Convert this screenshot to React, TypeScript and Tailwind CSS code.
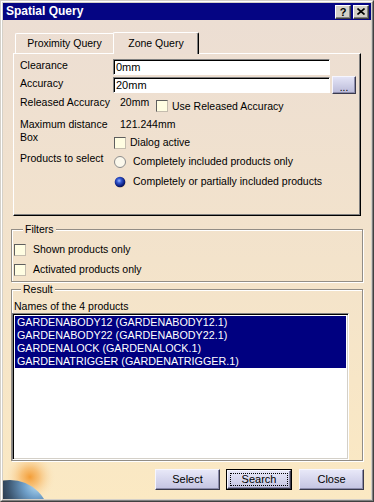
import React from "react";

function CheckBox({ className = "" }: { className?: string }) {
  return (
    <div
      className={`w-[12px] h-[12px] shrink-0 bg-[#fffde2] border border-t-[#5e5e5e] border-l-[#5e5e5e] border-r-[#c4bcae] border-b-[#c4bcae] ${className}`}
    />
  );
}

function Radio({ checked = false }: { checked?: boolean }) {
  if (checked) {
    return (
      <svg width="12" height="12" viewBox="0 0 12 12" className="shrink-0 ml-[1px]">
        <defs>
          <radialGradient id="rsel" cx="42%" cy="38%" r="62%">
            <stop offset="0" stopColor="#9ab8ff" />
            <stop offset="0.35" stopColor="#3458d0" />
            <stop offset="0.8" stopColor="#0c1f80" />
            <stop offset="1" stopColor="#071350" />
          </radialGradient>
        </defs>
        <circle cx="6.4" cy="6.4" r="5.4" fill="#e8c89a" opacity="0.7" />
        <circle cx="6" cy="6" r="5.3" fill="url(#rsel)" />
      </svg>
    );
  }
  return (
    <div className="w-[12px] h-[12px] ml-[1px] shrink-0 rounded-full bg-[#fbf8ec] border border-[#8c8c8c]" />
  );
}

function TextInput({ value }: { value: string }) {
  return (
    <div className="w-[217px] h-[16px] shrink-0 bg-white border border-t-[#808080] border-l-[#808080] border-r-white border-b-white shadow-[inset_1px_1px_0_#000] pl-[2px] text-[11px] leading-[14px] text-black">
      {value}
    </div>
  );
}

function Btn({ label, w, focused = false }: { label: string; w: string; focused?: boolean }) {
  const bevel =
    "bg-gradient-to-b from-[#e8e8f8] to-[#c4c4e2] border border-t-[#f6f6ff] border-l-[#f6f6ff] border-r-[#3a3a4c] border-b-[#3a3a4c] shadow-[inset_-1px_-1px_0_#8c8cac]";
  if (focused) {
    return (
      <div className={`${w} h-[21px] border border-black flex`}>
        <div className={`flex-1 ${bevel} p-[2px] flex`}>
          <div className="flex-1 border border-dotted border-black flex items-center justify-center text-[11px] leading-[13px]">
            {label}
          </div>
        </div>
      </div>
    );
  }
  return (
    <div className={`${w} h-[21px] ${bevel} flex items-center justify-center text-[11px] leading-[13px]`}>
      {label}
    </div>
  );
}

export default function App() {
  return (
    <div className="w-[374px] h-[502px] bg-[#d4d0c8] border border-t-[#d4d0c8] border-l-[#d4d0c8] border-r-[#404040] border-b-[#404040] font-['Liberation_Sans',Arial,sans-serif] text-black">
      <div className="w-full h-full border border-t-white border-l-white border-r-[#808080] border-b-[#808080] p-[1px] flex flex-col">
        {/* Title bar */}
        <div className="h-[17px] shrink-0 bg-[#050583] flex items-center pl-[3px] pr-[2px]">
          <span className="text-white font-bold text-[12px] leading-[15px]">Spatial Query</span>
          <div className="ml-auto flex gap-[2px]">
            <div className="w-[16px] h-[14px] bg-[#d4d0c8] border border-t-white border-l-white border-r-[#404040] border-b-[#404040] shadow-[inset_-1px_-1px_0_#808080] flex items-center justify-center text-[11px] font-bold leading-[12px]">
              ?
            </div>
            <div className="w-[16px] h-[14px] bg-[#d4d0c8] border border-t-white border-l-white border-r-[#404040] border-b-[#404040] shadow-[inset_-1px_-1px_0_#808080] flex items-center justify-center">
              <svg width="8" height="7" viewBox="0 0 8 7">
                <path d="M0.5 0.5 L7.5 6.5 M7.5 0.5 L0.5 6.5" stroke="#000" strokeWidth="1.6" fill="none" />
              </svg>
            </div>
          </div>
        </div>

        {/* Body */}
        <div className="relative flex-1 bg-gradient-to-b from-[#ecded3] via-[#f3e3cb] to-[#fbe9c3] overflow-hidden">
          <svg className="absolute left-0 bottom-0 z-0" width="64" height="44" viewBox="0 0 64 44">
            <defs>
              <radialGradient id="glow" cx="27" cy="22" r="26" gradientUnits="userSpaceOnUse">
                <stop offset="0" stopColor="#f39a30" stopOpacity="0.95" />
                <stop offset="0.35" stopColor="#f6b058" stopOpacity="0.7" />
                <stop offset="1" stopColor="#fbe9c3" stopOpacity="0" />
              </radialGradient>
              <radialGradient id="globe" cx="34" cy="30" r="44" gradientUnits="userSpaceOnUse">
                <stop offset="0" stopColor="#b4dcf4" />
                <stop offset="0.3" stopColor="#6e9ec8" />
                <stop offset="0.65" stopColor="#3c5670" />
                <stop offset="1" stopColor="#1c2330" />
              </radialGradient>
            </defs>
            <circle cx="27" cy="22" r="26" fill="url(#glow)" />
            <circle cx="7" cy="65" r="40" fill="url(#globe)" />
          </svg>

          <div className="relative z-10 flex flex-col pl-[8px] pr-[8px] pt-[12px]">
            {/* Tabs */}
            <div className="flex items-start h-[21px] ml-[4px]">
              <div className="mt-[1px] w-[98px] h-[20px] border-t border-l border-t-white border-l-white rounded-tl-[2px] flex items-center justify-center text-[10.5px] leading-[13px]">
                Proximity Query
              </div>
              <div className="relative z-10 w-[86px] h-[22px] bg-[#ecded3] border-t border-l border-r border-t-white border-l-white border-r-black shadow-[inset_-1px_0_0_#808080] rounded-t-[2px] flex items-center justify-center text-[10.5px] leading-[13px]">
                Zone Query
              </div>
            </div>

            {/* Panel */}
            <div className="ml-[2px] w-[348px] h-[163px] border border-t-white border-l-white border-r-black border-b-black shadow-[inset_-1px_-1px_0_#808080] pl-[6px] flex flex-col text-[10.5px] leading-[13px]">
              {/* Clearance */}
              <div className="mt-[5px] flex h-[16px]">
                <div className="w-[93px] shrink-0 self-start">Clearance</div>
                <TextInput value="0mm" />
              </div>
              {/* Accuracy */}
              <div className="mt-[2px] flex h-[16px] items-start">
                <div className="w-[93px] shrink-0">Accuracy</div>
                <TextInput value="20mm" />
                <div className="ml-[2px] -mt-[1px] w-[24px] h-[18px] bg-gradient-to-b from-[#e4e4f6] to-[#babad8] border border-t-[#f6f6ff] border-l-[#f6f6ff] border-r-[#3a3a4c] border-b-[#3a3a4c] shadow-[inset_-1px_-1px_0_#8c8cac] flex items-end justify-center pb-[1px] text-[10px] leading-[9px]">
                  ...
                </div>
              </div>
              {/* Released accuracy */}
              <div className="mt-[3px] flex h-[17px]">
                <div className="w-[93px] shrink-0 self-start whitespace-nowrap">Released Accuracy</div>
                <div className="w-[43px] shrink-0 pl-[7px] self-start">20mm</div>
                <CheckBox className="self-end mb-[1px]" />
                <div className="ml-[4px] self-end whitespace-nowrap">Use Released Accuracy</div>
              </div>
              {/* Max distance box */}
              <div className="mt-[5px] flex">
                <div className="w-[93px] shrink-0">
                  Maximum distance
                  <br />
                  Box
                </div>
                <div className="flex flex-col">
                  <div className="pl-[7px]">121.244mm</div>
                  <div className="mt-[5px] flex items-center h-[13px]">
                    <CheckBox className="ml-[1px]" />
                    <div className="ml-[4px]">Dialog active</div>
                  </div>
                </div>
              </div>
              {/* Products to select */}
              <div className="mt-[3px] flex">
                <div className="w-[93px] shrink-0 whitespace-nowrap">Products to select</div>
                <div className="flex flex-col">
                  <div className="mt-[3px] flex items-center h-[13px]">
                    <Radio />
                    <div className="ml-[7px] whitespace-nowrap">Completely included products only</div>
                  </div>
                  <div className="mt-[7px] flex items-center h-[13px]">
                    <Radio checked />
                    <div className="ml-[7px] whitespace-nowrap">Completely or partially included products</div>
                  </div>
                </div>
              </div>
            </div>

            {/* Filters */}
            <fieldset className="mt-[7px] border border-[#928d86] shadow-[1px_1px_0_#ffffff,inset_1px_1px_0_#ffffff] pb-[5px] text-[10.5px] leading-[13px]">
              <legend className="ml-[11px] px-[2px] bg-[#f2e2cc]">Filters</legend>
              <div className="mt-[7px] flex items-center h-[13px]">
                <CheckBox className="ml-[2px]" />
                <div className="ml-[7px]">Shown products only</div>
              </div>
              <div className="mt-[7px] flex items-center h-[13px]">
                <CheckBox className="ml-[2px]" />
                <div className="ml-[7px]">Activated products only</div>
              </div>
            </fieldset>

            {/* Result */}
            <fieldset className="mt-[1px] border border-[#928d86] shadow-[1px_1px_0_#ffffff,inset_1px_1px_0_#ffffff] text-[10.5px] leading-[13px]">
              <legend className="ml-[9px] px-[2px] bg-[#f4e4ca]">Result</legend>
              <div className="mt-[4px] pl-[2px] leading-[12px]">Names of the 4 products</div>
              <div className="mt-[1px] w-[337px] h-[147px] bg-white border border-t-[#808080] border-l-[#808080] border-r-white border-b-white shadow-[inset_1px_1px_0_#000,inset_-1px_-1px_0_#d4d0c8] pt-[2px] px-[2px] text-[10.75px]">
                {[
                  "GARDENABODY12 (GARDENABODY12.1)",
                  "GARDENABODY22 (GARDENABODY22.1)",
                  "GARDENALOCK (GARDENALOCK.1)",
                  "GARDENATRIGGER (GARDENATRIGGER.1)",
                ].map((t) => (
                  <div key={t} className="h-[13px] leading-[13px] bg-[#000080] text-white pl-[2px] whitespace-nowrap">
                    {t}
                  </div>
                ))}
              </div>
            </fieldset>

            {/* Buttons */}
            <div className="mt-[8px] -mr-[1px] flex justify-end">
              <Btn label="Select" w="w-[65px]" />
              <div className="ml-[6px]">
                <Btn label="Search" w="w-[66px]" focused />
              </div>
              <div className="ml-[7px]">
                <Btn label="Close" w="w-[65px]" />
              </div>
            </div>
          </div>
        </div>
      </div>
    </div>
  );
}
